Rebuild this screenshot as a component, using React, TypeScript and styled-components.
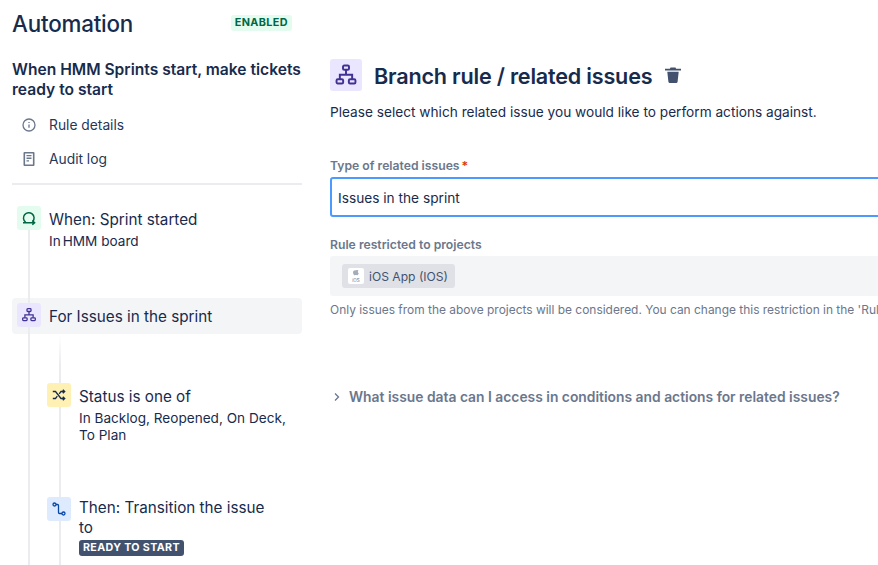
import { ReactNode } from "react"
import styled, { createGlobalStyle } from "styled-components"

const GlobalStyle = createGlobalStyle`
  html, body {
    margin: 0;
    background: #fff;
    font-family: Inter, "Noto Sans", sans-serif;
    color: #172b4d;
  }
`

const Page = styled.div`
  display: flex;
  width: 878px;
  height: 565px;
  overflow: hidden;
  box-sizing: border-box;
  padding-left: 12px;
  gap: 28px;
`

const Sidebar = styled.aside`
  width: 290px;
  flex: none;
  position: relative;
`

const TitleRow = styled.div`
  display: flex;
  align-items: center;
  justify-content: space-between;
  height: 48px;
  padding-right: 10px;
`

const Title = styled.h1`
  margin: 0;
  font-size: 22.4px;
  line-height: 48px;
  font-weight: 500;
  letter-spacing: -0.2px;
`

const EnabledBadge = styled.span`
  background: #e3fcef;
  color: #006644;
  font-size: 10.8px;
  font-weight: 700;
  letter-spacing: 0.4px;
  line-height: 16px;
  padding: 0 4px;
  border-radius: 3px;
  margin-top: -2px;
`

const RuleName = styled.h2`
  margin: 12px 0 0;
  font-size: 15.6px;
  line-height: 20px;
  font-weight: 600;
`

const NavLink = styled.div`
  display: flex;
  align-items: center;
  height: 34px;
  font-size: 13.8px;
  padding-left: 9px;
  gap: 12px;
  color: #253858;
  svg {
    width: 16px;
    height: 16px;
    color: #6b778c;
    flex: none;
  }
`

const NavList = styled.nav`
  margin-top: 8px;
`

const Divider = styled.div`
  height: 2px;
  background: #ebecf0;
  margin-top: 7px;
`

const Flow = styled.div`
  position: relative;
  padding-top: 21px;
`

const OuterLine = styled.div`
  position: absolute;
  z-index: 1;
  left: 16px;
  top: 40px;
  width: 2px;
  height: 340px;
  background: #ebecf0;
`

const InnerLine = styled.div`
  position: absolute;
  z-index: 1;
  left: 47px;
  top: 150px;
  width: 2px;
  height: 230px;
  background: linear-gradient(#fff, #ebecf0 30px);
`

const Step = styled.div<{ $indent?: boolean; $active?: boolean; $height: number; $gapAbove?: number }>`
  display: flex;
  gap: 8px;
  height: ${(p) => p.$height}px;
  box-sizing: border-box;
  padding: ${(p) => (p.$active ? "5px" : "0 5px")};
  margin-left: ${(p) => (p.$indent ? "30px" : "0")};
  margin-top: ${(p) => p.$gapAbove ?? 0}px;
  background: ${(p) => (p.$active ? "#f4f5f7" : "transparent")};
  border-radius: 4px;
`

const IconTile = styled.div<{ $bg: string; $fg: string; $size?: number }>`
  position: relative;
  z-index: 2;
  width: ${(p) => p.$size ?? 24}px;
  height: ${(p) => p.$size ?? 24}px;
  flex: none;
  display: flex;
  align-items: center;
  justify-content: center;
  background: ${(p) => p.$bg};
  color: ${(p) => p.$fg};
  border-radius: 3px;
`

const StepBody = styled.div`
  min-width: 0;
`

const StepTitle = styled.div<{ $tight?: boolean }>`
  font-size: 15.25px;
  line-height: 20px;
  padding-top: ${(p) => (p.$tight ? 1 : 4)}px;
  color: #172b4d;
`

const StepText = styled.div`
  font-size: 13.6px;
  line-height: 17px;
  margin-top: 3px;
  color: #172b4d;
`

const InPrefix = styled.span`
  margin-right: 2px;
`

const Lozenge = styled.span`
  display: inline-block;
  background: #42526e;
  color: #fff;
  font-size: 10.7px;
  font-weight: 700;
  letter-spacing: 0.35px;
  line-height: 16px;
  padding: 0 4px;
  margin-top: -1px;
  border-radius: 3px;
  vertical-align: top;
`

const Main = styled.main`
  flex: none;
  width: 640px;
  padding-top: 59px;
`

const Heading = styled.div`
  display: flex;
  align-items: center;
  height: 32px;
`

const HeadingText = styled.h2`
  margin: 1px 0 0 12px;
  font-size: 21.6px;
  line-height: 32px;
  font-weight: 600;
  letter-spacing: -0.2px;
  white-space: nowrap;
`

const TrashButton = styled.span`
  display: flex;
  margin-left: 12px;
  color: #42526e;
`

const Intro = styled.p`
  margin: 11px 0 0;
  font-size: 13.66px;
  line-height: 20px;
  white-space: nowrap;
`

const Label = styled.label<{ $top: number }>`
  display: block;
  margin-top: ${(p) => p.$top}px;
  font-size: 12.2px;
  line-height: 16px;
  font-weight: 600;
  color: #6b778c;
`

const Required = styled.span`
  color: #de350b;
  margin-left: 2px;
`

const TextInput = styled.div`
  width: 600px;
  height: 40px;
  box-sizing: border-box;
  margin-top: 3px;
  border: 2px solid #4c9aff;
  border-radius: 3px;
  padding: 1px 6px 0;
  font-size: 13.7px;
  line-height: 36px;
  color: #172b4d;
`

const ProjectsBox = styled.div`
  width: 600px;
  height: 40px;
  box-sizing: border-box;
  margin-top: 3px;
  padding: 8px 12px;
  background: #f4f5f7;
  border-radius: 3px;
`

const ProjectChip = styled.span`
  display: inline-flex;
  align-items: center;
  height: 24px;
  padding: 0 7px 0 6px;
  gap: 5px;
  background: #dfe1e6;
  border-radius: 3px;
  font-size: 12.1px;
  color: #42526e;
`

const ProjectAvatar = styled.span`
  width: 16px;
  height: 16px;
  display: flex;
  background: #fff;
  border-radius: 2px;
`

const HelpText = styled.p`
  margin: 6px 0 0;
  font-size: 11.95px;
  line-height: 16px;
  color: #6b778c;
  white-space: nowrap;
`

const Expander = styled.div`
  display: flex;
  align-items: center;
  gap: 8px;
  margin-top: 69px;
  padding-left: 3px;
  font-size: 13.85px;
  line-height: 20px;
  font-weight: 600;
  color: #6b778c;
  white-space: nowrap;
`

const Glyph = ({ size = 16, children }: { size?: number; children: ReactNode }) => (
  <svg width={size} height={size} viewBox="0 0 16 16" fill="none" stroke="currentColor" strokeWidth="1.3">
    {children}
  </svg>
)

const BranchIcon = ({ size = 16 }: { size?: number }) => (
  <Glyph size={size}>
    <rect x="6" y="1.7" width="4" height="2.8" rx="0.8" />
    <rect x="1.7" y="10.8" width="4.4" height="2.8" rx="0.8" />
    <rect x="9.9" y="10.8" width="4.4" height="2.8" rx="0.8" />
    <path d="M8 4.5v3.3M3.9 10.8V7.8h8.2v3" />
  </Glyph>
)

const App = () => {
  return (
    <>
      <GlobalStyle />
      <Page>
        <Sidebar>
          <TitleRow>
            <Title>Automation</Title>
            <EnabledBadge>ENABLED</EnabledBadge>
          </TitleRow>
          <RuleName>When HMM Sprints start, make tickets ready to start</RuleName>
          <NavList>
            <NavLink>
              <Glyph>
                <circle cx="8" cy="8" r="6" />
                <path d="M8 7.4v3.4M8 4.9v1" />
              </Glyph>
              Rule details
            </NavLink>
            <NavLink>
              <svg viewBox="0 0 16 16">
                <path
                  fill="currentColor"
                  fillRule="evenodd"
                  d="M3.5 1h9a1 1 0 0 1 1 1v12a1 1 0 0 1-1 1h-9a1 1 0 0 1-1-1V2a1 1 0 0 1 1-1zm.6 1.6v10.8h7.8V2.6zM5.5 4h5v1.3h-5zm0 2.6h5v1.3h-5zm0 2.6h2.5v1.3H5.5z"
                />
              </svg>
              Audit log
            </NavLink>
          </NavList>
          <Divider />
          <Flow>
            <OuterLine />
            <InnerLine />
            <Step $height={92}>
              <IconTile $bg="#e3fcef" $fg="#006644">
                <svg width="16" height="16" viewBox="0 0 16 16" fill="none" stroke="currentColor" strokeWidth="1.5">
                  <path d="M4.6 12.2A5.3 5.3 0 1 1 11.8 11.4" />
                  <path d="M2 12.8h11.5M11.3 10.6l2.3 2.2-2.3 2" />
                </svg>
              </IconTile>
              <StepBody>
                <StepTitle>When: Sprint started</StepTitle>
                <StepText>
                  <InPrefix>In</InPrefix>HMM board
                </StepText>
              </StepBody>
            </Step>
            <Step $active $height={36}>
              <IconTile $bg="#eae6ff" $fg="#403294">
                <BranchIcon />
              </IconTile>
              <StepBody>
                <StepTitle>For Issues in the sprint</StepTitle>
              </StepBody>
            </Step>
            <Step $indent $height={114} $gapAbove={49}>
              <IconTile $bg="#fff0b3" $fg="#172b4d">
                <Glyph>
                  <path d="M1.8 4.5h2.7l5.5 7h3.5M1.8 11.5h2.7l1.8-2.3M8.2 6.8l1.8-2.3h3.5M11.8 2.7l1.900 1.800-1.900 1.800M11.800 9.700l1.900 1.800-1.900 1.800" />
                </Glyph>
              </IconTile>
              <StepBody>
                <StepTitle>Status is one of</StepTitle>
                <StepText>
                  In Backlog, Reopened, On Deck,
                  <br />
                  To Plan
                </StepText>
              </StepBody>
            </Step>
            <Step $indent $height={80}>
              <IconTile $bg="#deebff" $fg="#0747a6">
                <Glyph>
                  <circle cx="3.5" cy="3.5" r="1.5" />
                  <circle cx="12.5" cy="12.5" r="1.5" />
                  <path d="M5 3.5h1.5a1 1 0 0 1 1 1v7a1 1 0 0 0 1 1H11" />
                </Glyph>
              </IconTile>
              <StepBody>
                <StepTitle $tight>
                  Then: Transition the issue
                  <br />
                  to
                </StepTitle>
                <StepText>
                  <Lozenge>READY TO START</Lozenge>
                </StepText>
              </StepBody>
            </Step>
          </Flow>
        </Sidebar>
        <Main>
          <Heading>
            <IconTile $bg="#eae6ff" $fg="#403294" $size={32}>
              <BranchIcon size={24} />
            </IconTile>
            <HeadingText>Branch rule / related issues</HeadingText>
            <TrashButton>
              <svg width="18" height="18" viewBox="0 0 18 18">
                <path
                  fill="currentColor"
                  d="M6.5 1.5h5l.6 1.3H17v1.7H1V2.800h4.900zM3.300 5.700h11.400l-1.100 10a1.500 1.500 0 0 1-1.500 1.300H5.900a1.500 1.500 0 0 1-1.500-1.300z"
                />
              </svg>
            </TrashButton>
          </Heading>
          <Intro>Please select which related issue you would like to perform actions against.</Intro>
          <Label $top={36}>
            Type of related issues<Required>*</Required>
          </Label>
          <TextInput>Issues in the sprint</TextInput>
          <Label $top={20}>Rule restricted to projects</Label>
          <ProjectsBox>
            <ProjectChip>
              <ProjectAvatar>
                <svg width="16" height="16" viewBox="0 0 16 16">
                  <path fill="#a5adba" d="M8 2.500c.8-.7 2.200-.5 2.500.3-1 .7-.8 2 .3 2.400-.4 1.200-1.100 2.100-1.700 2.100-.4 0-.7-.2-1.100-.2s-.7.2-1.100.2c-.8 0-1.900-1.600-1.900-2.900 0-1.600 1.600-2.400 3-1.900z" />
                  <text x="8" y="13.500" textAnchor="middle" fontSize="4.500" fontFamily="Inter, sans-serif" fill="#6b778c">iOS</text>
                </svg>
              </ProjectAvatar>
              iOS App (IOS)
            </ProjectChip>
          </ProjectsBox>
          <HelpText>
            Only issues from the above projects will be considered. You can change this restriction in the 'Rule details' page.
          </HelpText>
          <Expander>
            <svg width="8" height="10" viewBox="0 0 8 10" fill="none" stroke="currentColor" strokeWidth="1.3">
              <path d="M2 1.500 5.500 5 2 8.500" />
            </svg>
            What issue data can I access in conditions and actions for related issues?
          </Expander>
        </Main>
      </Page>
    </>
  )
}

export default App
